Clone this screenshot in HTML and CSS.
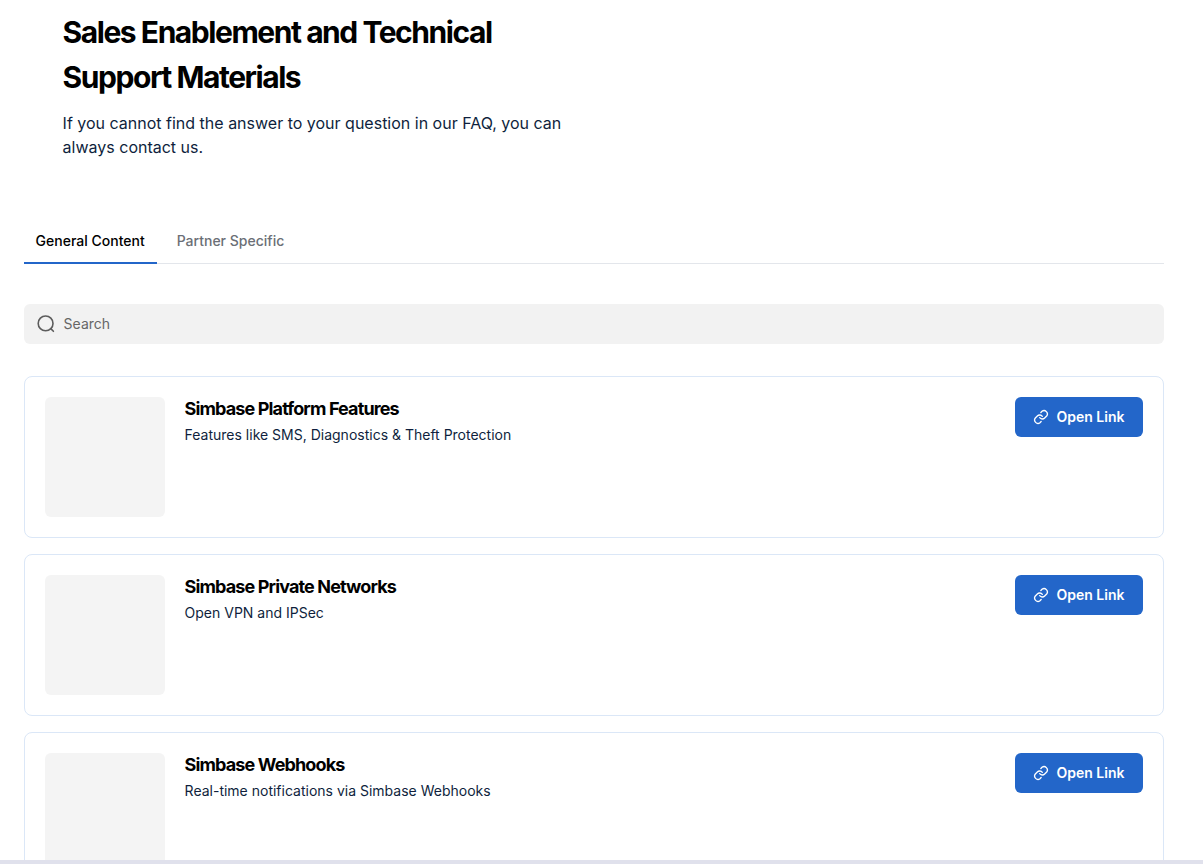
FILE: index.html
```html
<!DOCTYPE html>
<html lang="en">
<head>
<meta charset="utf-8">
<title>Sales Enablement and Technical Support Materials</title>
<link rel="stylesheet" href="styles.css">
</head>
<body>
<main class="page">
  <header class="intro">
    <h1 class="intro-title">Sales Enablement and Technical Support Materials</h1>
    <p class="intro-text">If you cannot find the answer to your question in our FAQ, you can always contact us.</p>
  </header>
  <nav class="tabs">
    <a class="tab tab-active">General Content</a>
    <a class="tab">Partner Specific</a>
  </nav>
  <div class="search">
    <svg class="search-icon" viewBox="0 0 20 20" fill="none" stroke="currentColor" stroke-width="1.6" stroke-linecap="round"><circle cx="9.6" cy="9.4" r="7.4"/><path d="M15 14.9l2.4 2.4"/></svg>
    <span class="search-text">Search</span>
  </div>
  <section class="cards">
    <article class="card">
      <div class="thumb"></div>
      <div class="card-body">
        <h2 class="card-title">Simbase Platform Features</h2>
        <p class="card-text">Features like SMS, Diagnostics &amp; Theft Protection</p>
      </div>
      <a class="btn"><svg class="btn-icon" viewBox="0 0 24 24" fill="none" stroke="currentColor" stroke-width="2" stroke-linecap="round" stroke-linejoin="round"><path d="M10 13a5 5 0 0 0 7.5.5l3-3a5 5 0 0 0-7-7l-1.7 1.7"/><path d="M14 11a5 5 0 0 0-7.5-.5l-3 3a5 5 0 0 0 7 7l1.7-1.7"/></svg><span class="btn-label">Open Link</span></a>
    </article>
    <article class="card">
      <div class="thumb"></div>
      <div class="card-body">
        <h2 class="card-title">Simbase Private Networks</h2>
        <p class="card-text">Open VPN and IPSec</p>
      </div>
      <a class="btn"><svg class="btn-icon" viewBox="0 0 24 24" fill="none" stroke="currentColor" stroke-width="2" stroke-linecap="round" stroke-linejoin="round"><path d="M10 13a5 5 0 0 0 7.5.5l3-3a5 5 0 0 0-7-7l-1.7 1.7"/><path d="M14 11a5 5 0 0 0-7.5-.5l-3 3a5 5 0 0 0 7 7l1.7-1.7"/></svg><span class="btn-label">Open Link</span></a>
    </article>
    <article class="card">
      <div class="thumb"></div>
      <div class="card-body">
        <h2 class="card-title">Simbase Webhooks</h2>
        <p class="card-text">Real-time notifications via Simbase Webhooks</p>
      </div>
      <a class="btn"><svg class="btn-icon" viewBox="0 0 24 24" fill="none" stroke="currentColor" stroke-width="2" stroke-linecap="round" stroke-linejoin="round"><path d="M10 13a5 5 0 0 0 7.5.5l3-3a5 5 0 0 0-7-7l-1.7 1.7"/><path d="M14 11a5 5 0 0 0-7.5-.5l-3 3a5 5 0 0 0 7 7l1.7-1.7"/></svg><span class="btn-label">Open Link</span></a>
    </article>
  </section>
</main>
<div class="bottom-bar"></div>
</body>
</html>
```

FILE: styles.css
```css
* { box-sizing: border-box; }
html, body { margin: 0; height: 864px; overflow: hidden; background: #fff; }
body { font-family: Inter, "Liberation Sans", sans-serif; color: #0f1f3d; }
.page { padding: 10px 39px 0 24px; }
.intro { padding-left: 38.6px; width: 540px; }
.intro-title {
  margin: 0;
  font-family: Inter, "Liberation Sans", sans-serif;
  font-size: 30px;
  line-height: 45px;
  font-weight: 700;
  letter-spacing: -1.45px;
  color: #000;
}
.intro-text { margin: 11px 0 0; font-size: 16px; line-height: 24px; }
.tabs { display: flex; margin-top: 61px; border-bottom: 1px solid #e3e6eb; height: 44px; }
.tab { padding: 0 12px 0 11.6px; font-size: 14px; line-height: 42px; font-weight: 500; color: #6b6f76; height: 44px; }
.tab-active { color: #000; border-bottom: 2px solid #2366c9; }
.tab + .tab { margin-left: 8.4px; }
.search { display: flex; align-items: center; gap: 7.6px; height: 40px; margin-top: 40px; padding-left: 12px; background: #f2f2f2; border-radius: 6px; color: #666; }
.search-icon { width: 20px; height: 20px; color: #5c5c5c; }
.search-text { font-size: 14px; line-height: 18px; margin-top: -1px; }
.cards { display: flex; flex-direction: column; gap: 16px; margin-top: 32px; }
.card { display: flex; align-items: flex-start; height: 162px; padding: 20px; border: 1px solid #dbe7f7; border-radius: 8px; background: #fff; }
.thumb { flex: none; width: 120px; height: 120px; background: #f4f4f4; border-radius: 6px; }
.card-body { flex: 1; padding-left: 19.6px; }
.card-title { margin: 0; font-family: Inter, "Liberation Sans", sans-serif; font-size: 18px; line-height: 24px; font-weight: 700; letter-spacing: -0.87px; color: #000; }
.card-text { margin: 4px 0 0; font-size: 14px; line-height: 20px; }
.btn { display: flex; align-items: center; justify-content: center; gap: 8px; flex: none; width: 128px; height: 40px; border-radius: 6px; background: #2366c9; color: #fff; font-size: 14px; font-weight: 600; }
.btn-label { margin-top: -1px; }
.btn-icon { width: 16px; height: 16px; margin-left: -1px; }
.bottom-bar { position: fixed; left: 0; right: 0; bottom: 0; height: 4px; background: #e0e1ec; }
```
